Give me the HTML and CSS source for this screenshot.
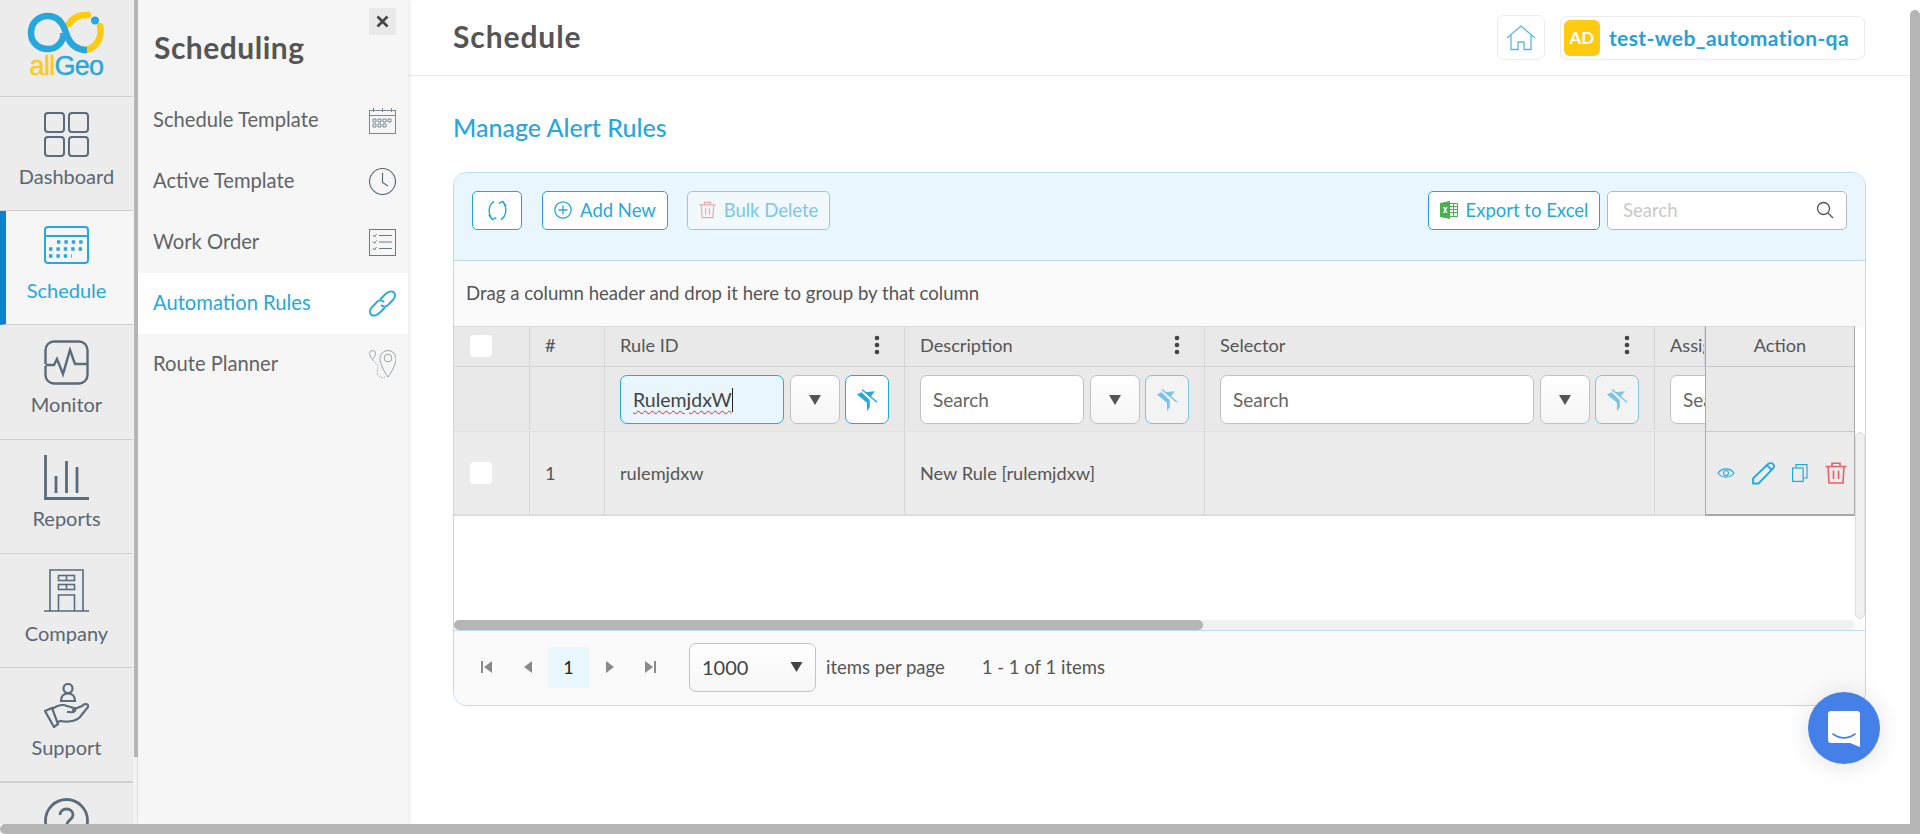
FILE: index.html
```html
<!DOCTYPE html>
<html lang="en">
<head>
<meta charset="utf-8">
<title>Manage Alert Rules</title>
<link rel="stylesheet" href="styles.css">
</head>
<body>
<svg class="defs" width="0" height="0">
  <defs>
    <symbol id="filter-off" viewBox="0 0 24 24">
      <path fill="currentColor" d="M1 6 L6 3.5 L15 12 V20 L12 24 V15 Z"/>
      <path fill="currentColor" d="M9.5 3.5 L20.5 2.5 L16 8.5 Z"/>
      <path fill="none" stroke="currentColor" stroke-width="1.6" d="M6.5 0.5 L23 14.5"/>
    </symbol>
    <symbol id="caret" viewBox="0 0 12 10"><path fill="currentColor" d="M0 0 H12 L6 10 Z"/></symbol>
    <symbol id="dots" viewBox="0 0 6 20"><circle cx="3" cy="3" r="2.3" fill="currentColor"/><circle cx="3" cy="10" r="2.3" fill="currentColor"/><circle cx="3" cy="17" r="2.3" fill="currentColor"/></symbol>
    <symbol id="trash" viewBox="0 0 22 22"><path fill="none" stroke="currentColor" stroke-width="1.6" d="M0.5 4.5 H21.5 M7 4.5 V1.2 H15 V4.5 M3 4.5 L4 21 H18 L19 4.5 M8.5 8.5 V17 M13.5 8.5 V17"/></symbol>
  </defs>
</svg>
<div class="app">
  <aside class="rail">
    <div class="rail-list">
      <div class="logo">
        <svg class="logo-mark" width="80" height="44" viewBox="0 0 80 44">
          <path fill="none" stroke="#ffcb11" stroke-width="6.5" stroke-linecap="round" d="M73 15 C76 27 68 38 58 39"/>
          <path fill="none" stroke="#ffcb11" stroke-width="6.5" stroke-linecap="round" d="M42 13 C45 7 53 3.500 61 4"/>
          <path fill="none" stroke="#27a7dd" stroke-width="6.5" stroke-linecap="butt" d="M36.5 22 C36.5 31 30 38 21 38 C11 38 4 31 4 22 C4 12 11 5 21 5 C31 5 36 12 39 22 C42 32 48 39 60 39"/>
          <circle cx="68" cy="9.500" r="4" fill="#27a7dd"/>
        </svg>
        <div class="logo-text"><span class="logo-all">all</span><span class="logo-geo">Geo</span></div>
      </div>
      <a class="rail-item">
        <svg width="45" height="45" viewBox="0 0 45 45" fill="none" stroke="#5a6b7b" stroke-width="2"><rect x="1" y="1" width="19" height="19" rx="3"/><rect x="25" y="1" width="19" height="19" rx="3"/><rect x="1" y="25" width="19" height="19" rx="3"/><rect x="25" y="25" width="19" height="19" rx="3"/></svg>
        <span>Dashboard</span>
      </a>
      <a class="rail-item rail-item-active">
        <svg width="45" height="38" viewBox="0 0 45 38" fill="none" stroke="#27a7dd" stroke-width="2"><rect x="1" y="1" width="43" height="36" rx="3"/><path d="M1 10 H44"/><path stroke-width="3.4" stroke-dasharray="3.4 4" d="M13 16 H42 M5 23 H42 M5 30 H28"/></svg>
        <span>Schedule</span>
      </a>
      <a class="rail-item">
        <svg width="45" height="45" viewBox="0 0 45 45" fill="none" stroke="#5a6b7b" stroke-width="2.4"><path d="M1.5 24 V10 A8.5 8.5 0 0 1 10 1.5 H35 A8.5 8.5 0 0 1 43.500 10 V35 A8.500 8.500 0 0 1 35 43.500 H10 A8.500 8.500 0 0 1 1.500 35 V26"/><path d="M1.500 25 H10 L13 19 L19 34 L26 10 L31 24 H43"/></svg>
        <span>Monitor</span>
      </a>
      <a class="rail-item rail-item-reports">
        <svg width="45" height="45" viewBox="0 0 45 45" fill="none" stroke="#5a6b7b" stroke-width="2.8"><path d="M1.500 0 V43.500 H45"/><path d="M12 21 V38 M22.500 6 V38 M33 12 V38"/></svg>
        <span>Reports</span>
      </a>
      <a class="rail-item rail-item-company">
        <svg width="45" height="43" viewBox="0 0 45 43" fill="none" stroke="#5a6b7b" stroke-width="1.600"><path d="M0 42 H45 M6 42 V1 H39 V42"/><path d="M14.500 42 V26 H30.500 V42"/><rect x="14.500" y="6.500" width="16" height="5"/><rect x="14.500" y="15.500" width="16" height="5"/><path d="M22.500 6.500 V11.500 M22.500 15.500 V20.500"/></svg>
        <span>Company</span>
      </a>
      <a class="rail-item">
        <svg width="45" height="45" viewBox="0 0 45 45" fill="none" stroke="#5a6b7b" stroke-width="2.200"><circle cx="24" cy="5.500" r="4.500"/><path d="M17 18 C17 13 20 10.500 24 10.500 C28 10.500 31 13 31 18 Z"/><path d="M1 28 L8 25 L14 41 L10 44 Z"/><path d="M8 26 C14 22 19 21 23 23 L30 25 C33 27 30 30 26 29 L23 29 M28 27 L38 23 C42 19 45 22 44 24 L36 34 C31 39 22 39 17 38 L13 39"/></svg>
        <span>Support</span>
      </a>
      <a class="rail-item rail-item-help">
        <svg width="45" height="45" viewBox="0 0 45 45" fill="none" stroke="#5a6b7b" stroke-width="2.800"><circle cx="22.500" cy="22.500" r="21"/><path d="M16 17 C16 9 29 9 29 17 C29 22 22.500 22 22.500 28"/></svg>
      </a>
    </div>
  </aside>
  <nav class="panel">
    <div class="panel-head">
      <h2 class="panel-title">Scheduling</h2>
      <button class="panel-close" type="button">
        <svg width="13" height="13" viewBox="0 0 13 13"><path d="M1.500 1.500 L11.500 11.500 M11.500 1.500 L1.500 11.500" stroke="#444" stroke-width="2.600" fill="none"/></svg>
      </button>
    </div>
    <a class="panel-item"><span>Schedule Template</span>
      <svg width="27" height="27" viewBox="0 0 27 27" fill="none" stroke="#7b8894" stroke-width="1"><rect x="0.500" y="3.500" width="26" height="23"/><path d="M0.500 8.500 H26.500 M4.500 1 V5 M13.500 1 V5 M22.500 1 V5"/><path d="M4 12 h3 v3 h-3 z M9 12 h3 v3 h-3 z M14 12 h3 v3 h-3 z M19 12 h3 v3 h-3 z M4 17 h3 v3 h-3 z M9 17 h3 v3 h-3 z M14 17 h3 v3 h-3 z"/></svg>
    </a>
    <a class="panel-item"><span>Active Template</span>
      <svg width="27" height="27" viewBox="0 0 27 27" fill="none" stroke="#5a6b7b" stroke-width="1.200"><circle cx="13.500" cy="13.500" r="13"/><path d="M13.500 5 V14.500 L19 18"/></svg>
    </a>
    <a class="panel-item"><span>Work Order</span>
      <svg width="27" height="27" viewBox="0 0 27 27" fill="none" stroke="#6b7885" stroke-width="1"><rect x="0.500" y="0.500" width="26" height="26"/><path d="M10 6.500 H23 M10 13 H23 M10 19.500 H23"/><path d="M4 6 L5.500 8 L7.500 5 M4 12.500 L5.500 14.500 L7.500 11.500 M4 19 L5.500 21 L7.500 18"/></svg>
    </a>
    <a class="panel-item panel-item-active"><span>Automation Rules</span>
      <svg width="27" height="27" viewBox="0 0 27 27" fill="none" stroke="#27a7dd" stroke-width="1.800"><path d="M11 9.500 L16 4.500 C19 1.500 23 0.500 25 2.500 C27 4.500 26 8.500 23 11 L18.500 15.500 C16.500 17 14 17 12 15"/><path d="M16 17.500 L11 22.500 C8 25.500 4 26.500 2 24.500 C0 22.500 1 18.500 4 16 L8.500 11.500 C10.500 10 13 10 15 12"/></svg>
    </a>
    <a class="panel-item"><span>Route Planner</span>
      <svg width="27" height="29" viewBox="0 0 27 29" fill="none" stroke="#9aa3ab" stroke-width="1"><path d="M3.500 9.500 C1 6 0.500 5 0.500 3.500 A3 3 0 0 1 6.500 3.500 C6.500 5 6 6 3.500 9.500 Z"/><circle cx="19" cy="8" r="3.800"/><path d="M19 27 C14 20 11 13 11 8.500 A8 8 0 0 1 27 8.500 C27 13 24 20 19 27 Z"/><path stroke-dasharray="1.500 1.500" d="M4 10 C6 13 9 14 9 17 C9 20 7 22 9 25 C11 28 14 28 16 27"/></svg>
    </a>
  </nav>
  <main class="main">
    <header class="topbar">
      <h1 class="page-title">Schedule</h1>
      <div class="top-actions">
        <button class="home-btn" type="button">
          <svg width="30" height="26" viewBox="0 0 30 26" fill="none" stroke="#5bb8e6" stroke-width="1.300"><path d="M1 13 L15 1 L29 13 M5 10 V24.500 H12 V17 H18 V24.500 H25 V10"/></svg>
        </button>
        <div class="user-chip"><span class="avatar">AD</span><span class="user-name">test-web_automation-qa</span></div>
      </div>
    </header>
    <section class="content">
      <h2 class="section-title">Manage Alert Rules</h2>
      <div class="card">
        <div class="toolbar">
          <button class="btn btn-icon" type="button">
            <svg width="21" height="21" viewBox="0 0 22 22" fill="none" stroke="#27a7dd" stroke-width="1.500"><path d="M7.500 1.500 C1.500 5 0.500 14 5.500 20 M1.800 15.500 L5.500 20.500 L9.800 18.500"/><path d="M14.500 20.500 C20.500 17 21.500 8 16.500 2 M20.200 6.500 L16.500 1.500 L12.200 3.500"/></svg>
          </button>
          <button class="btn btn-add" type="button">
            <svg width="18" height="18" viewBox="0 0 18 18" fill="none" stroke="#27a7dd" stroke-width="1.300"><circle cx="9" cy="9" r="8.200"/><path d="M9 4.500 V13.500 M4.500 9 H13.500"/></svg>
            Add New
          </button>
          <button class="btn btn-muted" type="button">
            <svg class="muted-trash" width="17" height="18"><use href="#trash"/></svg>
            Bulk Delete
          </button>
          <div class="spacer"></div>
          <button class="btn btn-excel" type="button">
            <svg width="18" height="18" viewBox="0 0 18 18"><path fill="#4caf50" d="M0 2 L10 0 V18 L0 16 Z"/><path fill="#fff" d="M3 6 H4.500 L5.200 8 L6 6 H7.500 L6 9 L7.500 12 H6 L5.200 10 L4.500 12 H3 L4.500 9 Z"/><path fill="none" stroke="#4caf50" stroke-width="1" d="M10 2.500 H17.500 V15.500 H10 M10 5.500 H17.500 M10 8.500 H17.500 M10 11.500 H17.500 M13.500 2.500 V15.500"/></svg>
            Export to Excel
          </button>
          <div class="search-box">
            <span>Search</span>
            <svg width="18" height="18" viewBox="0 0 18 18" fill="none" stroke="#555" stroke-width="1.300"><circle cx="7.500" cy="7.500" r="6"/><path d="M12 12 L17 17"/></svg>
          </div>
        </div>
        <div class="group-panel">Drag a column header and drop it here to group by that column</div>
        <div class="grid">
          <div class="grid-scroll">
            <div class="row row-head">
              <div class="cell cell-check"><span class="check"></span></div>
              <div class="cell">#</div>
              <div class="cell cell-title"><span>Rule ID</span><svg class="dots" width="6" height="20"><use href="#dots"/></svg></div>
              <div class="cell cell-title"><span>Description</span><svg class="dots" width="6" height="20"><use href="#dots"/></svg></div>
              <div class="cell cell-title"><span>Selector</span><svg class="dots" width="6" height="20"><use href="#dots"/></svg></div>
              <div class="cell cell-clipped">Assig</div>
            </div>
            <div class="row row-filter">
              <div class="cell"></div>
              <div class="cell"></div>
              <div class="cell cell-filter">
                <div class="f-input f-input-active"><span class="typed">RulemjdxW</span><span class="text-caret"></span></div>
                <button class="f-drop" type="button"><svg width="12" height="10"><use href="#caret"/></svg></button>
                <button class="f-clear f-clear-active" type="button"><svg width="22" height="24"><use href="#filter-off"/></svg></button>
              </div>
              <div class="cell cell-filter">
                <div class="f-input">Search</div>
                <button class="f-drop" type="button"><svg width="12" height="10"><use href="#caret"/></svg></button>
                <button class="f-clear" type="button"><svg width="22" height="24"><use href="#filter-off"/></svg></button>
              </div>
              <div class="cell cell-filter">
                <div class="f-input">Search</div>
                <button class="f-drop" type="button"><svg width="12" height="10"><use href="#caret"/></svg></button>
                <button class="f-clear" type="button"><svg width="22" height="24"><use href="#filter-off"/></svg></button>
              </div>
              <div class="cell cell-filter">
                <div class="f-input">Search</div>
              </div>
            </div>
            <div class="row row-data">
              <div class="cell cell-check"><span class="check"></span></div>
              <div class="cell">1</div>
              <div class="cell">rulemjdxw</div>
              <div class="cell">New Rule [rulemjdxw]</div>
              <div class="cell"></div>
              <div class="cell"></div>
            </div>
            <div class="action-col">
              <div class="action-head">Action</div>
              <div class="action-filter"></div>
              <div class="action-row">
                <svg width="18" height="12" viewBox="0 0 18 12" fill="none" stroke="#27a7dd" stroke-width="1.200"><path d="M1 6 C5 0.500 13 0.500 17 6 C13 11.500 5 11.500 1 6 Z"/><circle cx="9" cy="6" r="2.500"/></svg>
                <svg width="23" height="23" viewBox="0 0 23 23" fill="none" stroke="#27a7dd" stroke-width="1.800"><path d="M1 16.500 L16 2 C18 0.500 20.500 1 21.500 2.500 C22.500 4 22 5.500 21 6.500 L6.500 21.500 H1 Z"/><path d="M15 3.500 L20 8"/></svg>
                <svg width="16" height="18" viewBox="0 0 16 18" fill="none" stroke="#27a7dd" stroke-width="1.200"><rect x="0.600" y="4" width="10.500" height="13.400"/><path d="M4 4 V0.600 H15 V14 H11"/></svg>
                <svg class="action-trash" width="22" height="22"><use href="#trash"/></svg>
              </div>
            </div>
          </div>
          <div class="v-scroll"></div>
          <div class="h-scroll"><div class="h-thumb"></div></div>
        </div>
        <footer class="pager">
          <button class="pg" type="button"><svg width="11" height="12" viewBox="0 0 11 12"><path fill="#8a8a8a" d="M0 0 H2 V12 H0 Z M11 0 V12 L3 6 Z"/></svg></button>
          <button class="pg" type="button"><svg width="8" height="12" viewBox="0 0 8 12"><path fill="#8a8a8a" d="M8 0 V12 L0 6 Z"/></svg></button>
          <span class="pg pg-current">1</span>
          <button class="pg" type="button"><svg width="8" height="12" viewBox="0 0 8 12"><path fill="#8a8a8a" d="M0 0 V12 L8 6 Z"/></svg></button>
          <button class="pg" type="button"><svg width="11" height="12" viewBox="0 0 11 12"><path fill="#8a8a8a" d="M0 0 V12 L8 6 Z M9 0 H11 V12 H9 Z"/></svg></button>
          <div class="page-size"><span>1000</span><svg width="13" height="10"><use href="#caret"/></svg></div>
          <span class="per-page">items per page</span>
          <span class="page-info">1 - 1 of 1 items</span>
        </footer>
      </div>
    </section>
  </main>
</div>
<button class="chat" type="button">
  <svg width="32" height="36" viewBox="0 0 32 36"><path fill="#fff" d="M3 0 H29 A3 3 0 0 1 32 3 V36 L22 32 H3 A3 3 0 0 1 0 29 V3 A3 3 0 0 1 3 0 Z"/><path fill="none" stroke="#4480e8" stroke-width="1.600" stroke-linecap="round" d="M5 23 C12 28 20 28 27 23"/></svg>
</button>
<div class="page-scroll-v"></div>
<div class="page-scroll-h"></div>
</body>
</html>
```

FILE: styles.css
```css
* { box-sizing: border-box; }
html, body { margin: 0; height: 100%; overflow: hidden; }
body { font-family: Lato, "Open Sans", sans-serif; color: #555; background: #fff; }
button { font-family: inherit; padding: 0; cursor: pointer; }
h1, h2 { margin: 0; }
.defs { position: absolute; }

.app { display: flex; width: 1910px; height: 824px; overflow: hidden; }

.rail { position: relative; width: 138px; flex: none; padding-right: 4px; background: #f3f3f3; border-right: 1px solid #e2e2e2; }
.rail::after { content: ""; position: absolute; top: 0; left: 134px; width: 4px; height: 757px; background: #b5b5b5; }
.rail-list { height: 824px; overflow: hidden; background: #ececec; }
.logo { display: flex; flex-direction: column; align-items: center; height: 97px; padding-top: 11px; border-bottom: 1px solid #cfcfcf; }
.logo-mark { flex: none; }
.logo-text { font-family: "Liberation Sans", Arial, sans-serif; font-size: 27px; line-height: 24px; letter-spacing: -0.7px; margin-top: -1px; -webkit-text-stroke: 0.4px; }
.logo-all { color: #ffcb11; }
.logo-geo { color: #27a7dd; }
.rail-item { display: flex; flex-direction: column; align-items: center; height: 114.200px; padding-top: 15px; border-bottom: 1px solid #cfcfcf; color: #5a6672; font-size: 20px; }
.rail-item span { margin-top: 7px; line-height: 24px; }
.rail-item-active { background: #f6f6f6; border-left: 6px solid #0a82cc; color: #27a7dd; padding-right: 6px; }
.rail-item-active span { margin-top: 14px; }
.rail-item-reports span { margin-top: 6px; }
.rail-item-company span { margin-top: 9px; }
.rail-item-help { border-bottom: 0; border-top: 2px solid #cfcfcf; margin-top: -1px; }

.panel { width: 270px; flex: none; background: #f6f6f6; box-shadow: 2px 0 4px rgba(0,0,0,.08); z-index: 1; }
.panel-head { display: flex; justify-content: space-between; align-items: flex-start; height: 90px; padding: 8px 12px 0 16px; }
.panel-title { font-size: 30px; font-weight: 700; color: #555; margin-top: 23px; line-height: 32px; letter-spacing: .5px; }
.panel-close { width: 27px; height: 27px; border: 0; background: #e9e9e9; display: flex; align-items: center; justify-content: center; }
.panel-item { display: flex; justify-content: space-between; align-items: center; height: 61px; padding: 0 12px 0 15px; font-size: 20.200px; color: #5f6468; }
.panel-item span { margin-bottom: 4px; }
.panel-item-active { background: #fff; color: #27a7dd; }

.main { flex: 1; min-width: 0; background: #fff; }
.topbar { display: flex; justify-content: space-between; align-items: center; height: 76px; padding: 0 45px; border-bottom: 1px solid #e9e9e9; }
.page-title { font-size: 30px; font-weight: 700; color: #555; letter-spacing: .9px; margin-top: -3px; }
.top-actions { display: flex; align-items: center; gap: 15px; }
.home-btn { width: 48px; height: 45px; background: #fff; border: 1px solid #ececec; border-radius: 7px; display: flex; align-items: center; justify-content: center; }
.user-chip { display: flex; align-items: center; height: 44px; padding: 0 15px 0 3px; gap: 9px; border: 1px solid #ececec; border-radius: 7px; }
.avatar { width: 36px; height: 36px; background: #ffcb11; color: #fff; border-radius: 6px; font-weight: 700; font-size: 17px; display: flex; align-items: center; justify-content: center; }
.user-name { color: #27a0d8; font-weight: 700; font-size: 21px; letter-spacing: .4px; }

.content { padding: 0 44px 0 45px; }
.section-title { height: 96px; padding-top: 35px; font-size: 25px; line-height: 32px; font-weight: 500; color: #27a7dd; }

.card { height: 534px; border: 1px solid #bcdcec; border-radius: 14px; overflow: hidden; background: #fff; font-size: 18.200px; }
.toolbar { display: flex; align-items: flex-start; height: 88px; padding: 18px 18px 0 18px; background: #e9f6fd; border-bottom: 1px solid #bcdcec; }
.btn { display: flex; align-items: center; justify-content: center; gap: 8px; height: 39px; padding: 0 0 1px; margin-right: 20px; background: #fff; border: 1px solid #2aa0d6; border-radius: 5px; color: #27a7dd; font-size: 18.500px; }
.btn-icon { width: 50px; }
.btn-add { width: 126px; margin-right: 19px; }
.btn-muted { width: 143px; border-color: #8acbea; color: #7cc6e8; background: #f1f9fd; margin-right: 0; }
.muted-trash { color: #f0a8ac; }
.spacer { flex: 1; }
.btn-excel { margin-right: 7px; width: 172px; }
.search-box { display: flex; align-items: center; justify-content: space-between; width: 240px; height: 39px; padding: 0 12px 1px 15px; background: #fff; border: 1px solid #b9b9b9; border-radius: 5px; color: #c9c9c9; font-size: 18.500px; }
.group-panel { display: flex; align-items: center; height: 65px; padding: 0 0 2px 12px; background: #fafafa; color: #555; font-size: 18.600px; }

.grid { position: relative; height: 304px; }
.grid-scroll { position: relative; width: 1401px; height: 294px; overflow: hidden; background: #fff; }
.row { display: grid; grid-template-columns: 76px 75px 300px 300px 450px 200px; width: 1401px; overflow: hidden; background: #e9e9e9; }
.row-head { height: 41px; border-top: 1px solid #dcdcdc; border-bottom: 1px solid #d6d6d6; }
.row-head .cell { padding-bottom: 3px; }
.row-filter { height: 65px; border-bottom: 1px solid #e0e0e0; }
.row-data { height: 84px; background: #ececec; border-bottom: 2px solid #dcdcdc; }
.cell { display: flex; align-items: center; padding-left: 15px; border-right: 1px solid #d6d6d6; min-width: 0; overflow: hidden; white-space: nowrap; }
.cell-check { padding-left: 16px; }
.row-head .cell-check { padding-bottom: 1px; }
.check { width: 22px; height: 22px; background: #fff; border-radius: 4px; }
.cell-title { justify-content: space-between; padding-right: 24px; }
.cell-clipped { width: 50px; }
.dots { color: #444; }
.cell-filter { padding-right: 15px; padding-top: 1px; gap: 6px; }
.f-input { display: flex; align-items: center; flex: 1; min-width: 0; height: 49px; padding-left: 12px; background: #fff; border: 1px solid #c2c2c2; border-radius: 7px; color: #666; font-size: 19px; }
.f-input-active { background: #e9f6fd; border-color: #27a7dd; color: #444; font-size: 19.500px; }
.typed { text-decoration: underline wavy #e22; text-decoration-thickness: 1px; text-underline-offset: 3px; }
.text-caret { width: 1px; height: 24px; background: #222; }
.f-drop { flex: none; width: 50px; height: 49px; background: linear-gradient(#fff, #f5f5f5); border: 1px solid #c2c2c2; border-radius: 7px; color: #555; display: flex; align-items: center; justify-content: center; }
.f-clear { flex: none; width: 44px; height: 49px; background: #f3f3f3; border: 1px solid #7cc4e4; border-radius: 7px; color: #7cc4e4; display: flex; align-items: center; justify-content: center; margin-left: -1px; }
.f-clear-active { background: #fff; border-color: #27a7dd; color: #27a7dd; }

.action-col { position: absolute; top: 0; right: 0; width: 150px; height: 190px; background: #e9e9e9; border: 1px solid #a9a9a9; border-top: 0; border-bottom: 2px solid #a9a9a9; }
.action-head { display: flex; align-items: center; justify-content: center; height: 41px; padding-bottom: 3px; border-top: 1px solid #dcdcdc; border-bottom: 1px solid #c9c9c9; }
.action-filter { height: 65px; border-bottom: 1px solid #c9c9c9; }
.action-row { display: flex; align-items: center; justify-content: space-between; height: 82px; padding: 0 7px 0 11px; background: #ececec; }
.action-trash { color: #f25c64; }

.v-scroll { position: absolute; top: 106px; right: 0; width: 10px; height: 187px; background: #f1f1f1; border: 1px solid #dedede; border-radius: 5px; }
.h-scroll { position: absolute; left: 0; bottom: 0; width: 1401px; height: 10px; background: #f1f1f1; border-radius: 5px; }
.h-thumb { width: 749px; height: 100%; background: #b5b5b5; border-radius: 5px; }

.pager { display: flex; align-items: center; height: 75px; padding: 0 0 2px 12px; background: #fafafa; border-top: 1px solid #bcdcec; font-size: 18.500px; }
.pg { display: flex; align-items: center; justify-content: center; width: 41px; height: 41px; border: 0; background: none; }
.pg-current { background: #e9f6fd; color: #222; font-size: 18px; }
.page-size { display: flex; align-items: center; justify-content: space-between; width: 127px; height: 49px; margin-left: 18px; padding: 0 12px; background: linear-gradient(#fff, #f6f6f6); border: 1px solid #c2c2c2; border-radius: 7px; font-size: 20px; color: #444; }
.per-page { margin-left: 10px; }
.page-info { margin-left: 37px; }

.chat { position: fixed; left: 1808px; top: 692px; width: 72px; height: 72px; border: 0; border-radius: 50%; background: #4480e8; box-shadow: 0 2px 24px rgba(0,0,0,.12); display: flex; align-items: center; justify-content: center; padding-top: 2px; }
.page-scroll-v { position: fixed; left: 1910px; top: 10px; width: 10px; height: 824px; background: #b5b5b5; border-radius: 5px 5px 0 0; }
.page-scroll-h { position: fixed; left: 0; top: 824px; width: 1920px; height: 10px; background: #b5b5b5; border-radius: 5px 0 0 5px; }
```
